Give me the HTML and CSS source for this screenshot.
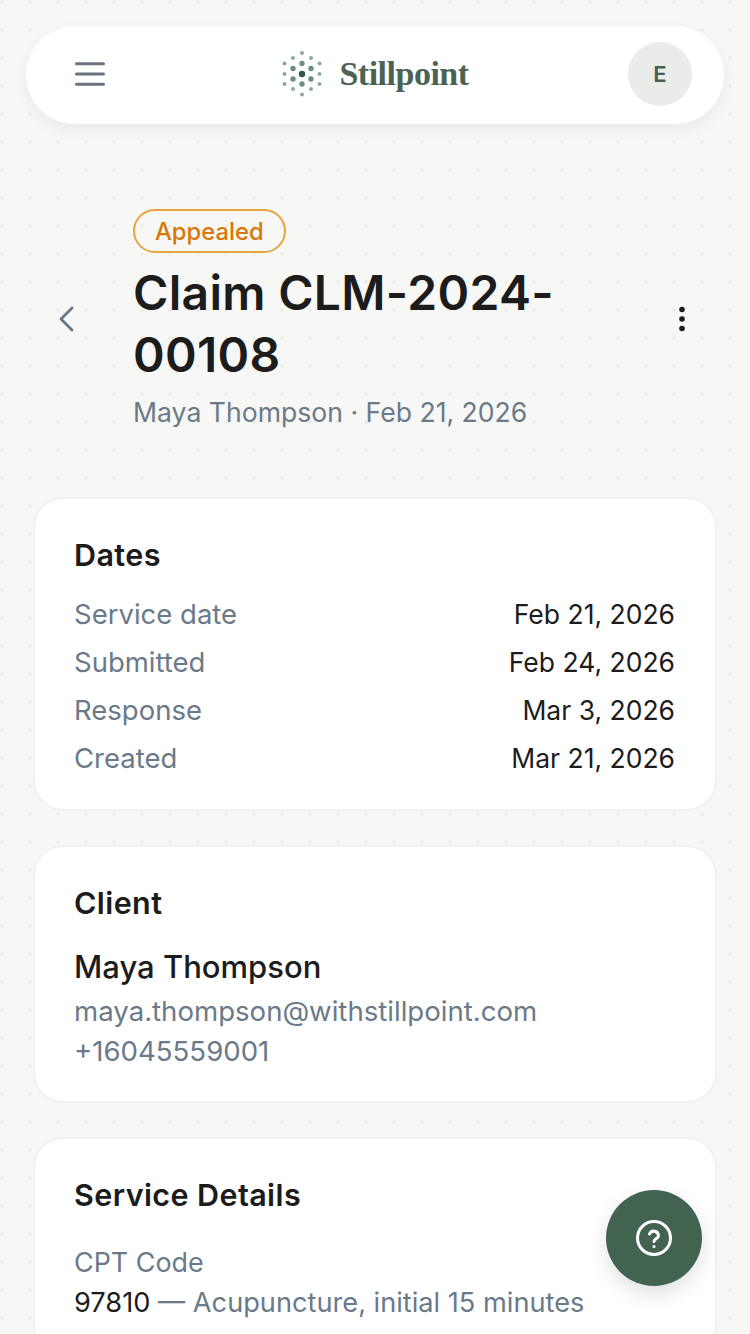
FILE: index.html
```html
<!DOCTYPE html>
<html lang="en">
<head>
<meta charset="utf-8">
<title>Claim CLM-2024-00108</title>
<link rel="stylesheet" href="styles.css">
</head>
<body>
<div class="page">
  <header class="topbar">
    <button class="icon-btn menu" aria-label="Menu">
      <svg width="32" height="26" viewBox="0 0 32 26"><path d="M2.500 2.700h27M2.500 13h27M2.500 23.300h27" fill="none" stroke="#6b7280" stroke-width="3" stroke-linecap="round"/></svg>
    </button>
    <div class="brand">
      <svg class="brand-mark" width="44" height="48" viewBox="0 0 44 48">
        <g fill="#8fa99d">
          <circle cx="21" cy="3" r="2"/><circle cx="30" cy="8" r="2"/><circle cx="38.500" cy="13.500" r="2"/><circle cx="38.500" cy="24" r="2"/><circle cx="38.500" cy="34" r="2"/><circle cx="30" cy="39" r="2"/><circle cx="21" cy="44.500" r="2"/><circle cx="12" cy="39" r="2"/><circle cx="3.500" cy="34" r="2"/><circle cx="3.500" cy="24" r="2"/><circle cx="3.500" cy="13.500" r="2"/><circle cx="12" cy="8" r="2"/>
        </g>
        <g fill="#67917d">
          <circle cx="21" cy="13.500" r="2.700"/><circle cx="30" cy="18.500" r="2.700"/><circle cx="30" cy="29" r="2.700"/><circle cx="21" cy="34" r="2.700"/><circle cx="12" cy="29" r="2.700"/><circle cx="12" cy="18.500" r="2.700"/>
        </g>
        <circle cx="21" cy="24" r="3.200" fill="#2f5845"/>
      </svg>
      <span class="brand-name">Stillpoint</span>
    </div>
    <div class="avatar">E</div>
  </header>

  <section class="claim-head">
    <button class="icon-btn back" aria-label="Back">
      <svg width="16" height="26" viewBox="0 0 16 26"><path d="M14 2 3 13l11 11" fill="none" stroke="#64748b" stroke-width="2.800" stroke-linecap="round" stroke-linejoin="round"/></svg>
    </button>
    <div class="claim-title">
      <span class="badge">Appealed</span>
      <h1>Claim CLM-2024-<br>00108</h1>
      <p class="sub">Maya Thompson · Feb 21, 2026</p>
    </div>
    <button class="icon-btn kebab" aria-label="More">
      <svg width="8" height="26" viewBox="0 0 8 26"><circle cx="4" cy="3.500" r="2.800"/><circle cx="4" cy="13" r="2.800"/><circle cx="4" cy="22.500" r="2.800"/></svg>
    </button>
  </section>

  <section class="card">
    <h2>Dates</h2>
    <dl class="rows">
      <div class="row"><dt>Service date</dt><dd>Feb 21, 2026</dd></div>
      <div class="row"><dt>Submitted</dt><dd>Feb 24, 2026</dd></div>
      <div class="row"><dt>Response</dt><dd>Mar 3, 2026</dd></div>
      <div class="row"><dt>Created</dt><dd>Mar 21, 2026</dd></div>
    </dl>
  </section>

  <section class="card">
    <h2>Client</h2>
    <p class="client-name">Maya Thompson</p>
    <p class="muted">maya.thompson@withstillpoint.com</p>
    <p class="muted">+16045559001</p>
  </section>

  <section class="card">
    <h2>Service Details</h2>
    <p class="muted label">CPT Code</p>
    <p class="code"><span class="dark">97810</span> — Acupuncture, initial 15 minutes</p>
  </section>
</div>
<button class="fab" aria-label="Help">
  <svg width="38" height="38" viewBox="0 0 38 38" fill="none" stroke="#fff" stroke-width="3" stroke-linecap="round"><circle cx="19" cy="19" r="16.500"/><path d="M14.500 15a4.700 4.700 0 0 1 9 1.400c0 3-4.500 3.600-4.500 6"/><circle cx="19" cy="27.500" r="0.600" fill="#fff" stroke-width="2"/></svg>
</button>
</body>
</html>
```
FILE: styles.css
```css
* { box-sizing: border-box; margin: 0; padding: 0; }
html, body { height: 1334px; overflow: hidden; }
body {
  font-family: "Inter", "Liberation Sans", sans-serif;
  color: #1c1c1c;
  background-color: #f7f7f6;
  background-image: radial-gradient(circle at 2px 2px, #eeede9 1.5px, transparent 2px);
  background-size: 28px 28px;
  position: relative;
}
.page { padding: 26px 33px 0; display: flex; flex-direction: column; }
.icon-btn { background: none; border: 0; display: flex; align-items: center; justify-content: center; }
.topbar {
  margin: 0 -7px;
  height: 98px;
  padding: 0 32px 2px 48px;
  background: #fff;
  border-radius: 49px;
  display: grid;
  grid-template-columns: 1fr auto 1fr;
  align-items: center;
  box-shadow: 0 6px 16px rgba(0, 0, 0, .06);
}
.menu { justify-self: start; }
.brand { display: flex; align-items: center; gap: 14px; transform: translateX(-8px); }
.brand-mark { display: block; }
.brand-name {
  font-family: "Liberation Serif", serif;
  font-weight: 700;
  font-size: 34px;
  letter-spacing: -.5px;
  color: #4a6354;
}
.avatar {
  justify-self: end;
  width: 64px; height: 64px; border-radius: 50%;
  background: #e9ece8; color: #45604f;
  display: flex; align-items: center; justify-content: center;
  font-size: 22px; font-weight: 600;
}
.claim-head { display: flex; align-items: center; margin-top: 85px; }
.back { width: 100px; justify-content: flex-start; padding-left: 25px; }
.claim-title { flex: 1; display: flex; flex-direction: column; align-items: flex-start; }
.badge {
  height: 44px; padding: 0 20px;
  display: flex; align-items: center;
  border: 2px solid #e8a33d; border-radius: 22px;
  color: #d97706; font-size: 23.800px; font-weight: 500;
}
h1 { font-size: 48px; line-height: 62px; font-weight: 600; letter-spacing: .3px; margin-top: 9px; color: #1c1c1c; }
.sub { font-size: 26.600px; line-height: 34px; color: #6b7a88; margin-top: 9px; }
.kebab { margin-right: 31px; }
.kebab svg { fill: #1c1c1c; }
.card {
  background: #fff;
  border: 2px solid #f1f1ef;
  border-radius: 30px;
  padding: 38px 40px 30px 39px;
  margin-top: 34px;
}
.claim-head + .card { margin-top: 68px; }
h2 { font-size: 30.500px; line-height: 36px; font-weight: 600; letter-spacing: .4px; }
.rows { margin: 17px 0 -3px; }
.row { display: flex; justify-content: space-between; height: 48px; align-items: center; }
dt { color: #6b7a88; font-size: 27.500px; }
dd { color: #1c1c1c; font-size: 26.500px; }
.client-name { font-size: 31px; line-height: 40px; font-weight: 500; margin-top: 26px; }
.muted { font-size: 27.600px; line-height: 40px; color: #6b7a88; }
.client-name + .muted { margin-top: 4px; }
.label { margin-top: 29px; font-size: 26.900px; }
.code { font-size: 27.200px; line-height: 40px; color: #6b7a88; margin-top: 1px; }
.dark { color: #1c1c1c; }
.fab {
  position: absolute; left: 606px; top: 1190px;
  width: 96px; height: 96px; border-radius: 50%;
  border: 0; background: #436351;
  display: flex; align-items: center; justify-content: center;
  box-shadow: 0 8px 20px rgba(0, 0, 0, .12);
}
```
